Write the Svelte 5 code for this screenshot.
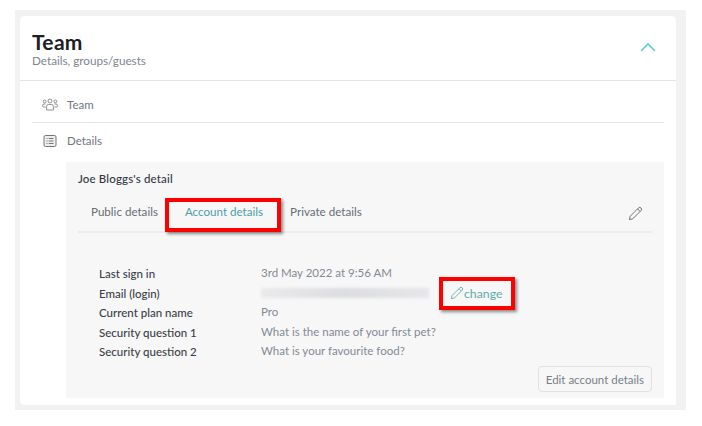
<script>
  const rows = [
    { label: 'Last sign in', value: '3rd May 2022 at 9:56 AM' },
    { label: 'Email (login)', blurred: true },
    { label: 'Current plan name', value: 'Pro' },
    { label: 'Security question 1', value: 'What is the name of your first pet?' },
    { label: 'Security question 2', value: 'What is your favourite food?' },
  ];
</script>

{#snippet pencil(size)}
  <svg width={size} height={size} viewBox="0 0 16 16" fill="none" stroke="currentColor" stroke-width="1" stroke-linejoin="round">
    <path d="M1.5 14.5 L2.3 11 L11.3 2 Q12.6 0.9 13.9 2.1 Q15.1 3.4 14 4.7 L5 13.7 Z" />
    <path d="M10.2 3.1 L12.9 5.8" />
  </svg>
{/snippet}

<div class="page">
  <div class="frame">
    <div class="card">
      <header class="head">
        <div>
          <h1>Team</h1>
          <p>Details, groups/guests</p>
        </div>
        <svg class="chevron" width="16" height="10" viewBox="0 0 16 10" fill="none" stroke="#5fcfc0" stroke-width="1.6">
          <path d="M1 9 L8 2 L15 9" />
        </svg>
      </header>

      <div class="body">
        <div class="row team-row">
          <svg class="icon" width="16" height="13" viewBox="0 0 16 13" fill="none" stroke="#777" stroke-width="0.8">
            <circle cx="8" cy="3" r="2" />
            <circle cx="2.6" cy="3.4" r="1.4" />
            <circle cx="13.4" cy="3.4" r="1.4" />
            <path d="M4.6 12 V8.6 Q4.6 6.5 6.5 6.5 H9.5 Q11.4 6.5 11.4 8.6 V12 Z" />
            <path d="M3.6 9 H1.6 Q0.6 9 0.6 7.6 Q0.6 6 2 6 H3.6" />
            <path d="M12.4 9 H14.4 Q15.4 9 15.4 7.6 Q15.4 6 14 6 H12.4" />
          </svg>
          <span>Team</span>
        </div>
        <div class="row details-row">
          <svg class="icon" width="13" height="12" viewBox="0 0 13 12" fill="none" stroke="#666" stroke-width="0.9">
            <rect x="0.5" y="0.5" width="12" height="11" rx="1.5" fill="#eee" />
            <path d="M3 3.5 H4 M5.2 3.5 H10 M3 6 H4 M5.2 6 H10 M3 8.5 H4 M5.2 8.5 H10" />
          </svg>
          <span>Details</span>
        </div>

        <section class="panel">
          <h2>Joe Bloggs's detail</h2>
          <nav class="tabs">
            <span class="tab">Public details</span>
            <span class="tab active">Account details</span>
            <span class="tab private">Private details</span>
            <span class="tab-edit">{@render pencil(15)}</span>
          </nav>

          <dl class="info">
            {#each rows as row}
              <div class="line">
                <dt>{row.label}</dt>
                {#if row.blurred}
                  <dd class="email">
                    <span class="blur"></span>
                    <span class="change">{@render pencil(14)}change</span>
                  </dd>
                {:else}
                  <dd>{row.value}</dd>
                {/if}
              </div>
            {/each}
          </dl>

          <div class="actions">
            <button>Edit account details</button>
          </div>
        </section>
      </div>
    </div>
  </div>
</div>

<style>
  :global(body) {
    margin: 0;
    background: #fff;
    font-family: Lato, "Open Sans", sans-serif;
  }
  .page {
    width: 702px;
    height: 426px;
    padding: 10px 16px 16px 15px;
    box-sizing: border-box;
  }
  .frame {
    height: 400px;
    background: #f2f2f3;
    padding: 6px 10px 5px 5px;
    box-sizing: border-box;
  }
  .card {
    height: 389px;
    background: #fff;
    border-radius: 5px 5px 0 5px;
    overflow: hidden;
  }
  .head {
    height: 65px;
    box-sizing: border-box;
    border-bottom: 1px solid #e2e4ea;
    padding: 15px 20px 0 12px;
    display: flex;
    justify-content: space-between;
  }
  h1 {
    margin: 0;
    font-size: 21px;
    line-height: 22px;
    font-weight: 700;
    color: #1b2026;
    letter-spacing: 0.3px;
  }
  .head p {
    margin: 0;
    font-size: 11.7px;
    line-height: 14px;
    color: #7d8690;
  }
  .chevron {
    margin-top: 11px;
  }
  .body {
    padding: 0 12px;
  }
  .row {
    box-sizing: border-box;
    display: flex;
    align-items: center;
    font-size: 11.5px;
    color: #6f7780;
  }
  .team-row {
    height: 42px;
    padding-top: 5px;
    border-bottom: 1px solid #e2e4ea;
  }
  .details-row {
    height: 39px;
    padding-bottom: 4px;
  }
  .icon {
    margin-left: 10px;
    margin-right: 9px;
    width: 16px;
  }
  .panel {
    margin-left: 34px;
    height: 236px;
    box-sizing: border-box;
    background: #f7f7f8;
    padding: 10px 12px 0;
    position: relative;
  }
  h2 {
    margin: 0;
    font-size: 11.5px;
    line-height: 14px;
    font-weight: 500;
    letter-spacing: 0.15px;
    color: #33383f;
  }
  .tabs {
    margin-top: 14px;
    height: 31px;
    display: flex;
    align-items: flex-start;
    border-bottom: 2px solid #ececee;
    font-size: 11.6px;
    color: #666d75;
  }
  .tab {
    line-height: 20px;
    padding-top: 2px;
  }
  .tab:first-child {
    margin-left: 13px;
  }
  .active {
    position: relative;
    margin-left: 27px;
    color: #4f9ea6;
  }
  .active::after {
    content: '';
    position: absolute;
    left: -20px;
    right: -18px;
    top: -2px;
    height: 26px;
    border: 4px solid #f00;
    box-shadow: 2px 2px 3px rgba(0, 0, 0, 0.45);
  }
  .private {
    margin-left: 27px;
  }
  .tab-edit {
    margin-left: auto;
    margin-right: 9px;
    margin-top: 6px;
    color: #666;
  }
  .info {
    margin: 31px 0 0 21px;
  }
  .line {
    display: flex;
    height: 19.5px;
    align-items: center;
    font-size: 11.5px;
  }
  dt {
    width: 162px;
    font-weight: 500;
    color: #3a4047;
  }
  dd {
    margin: 0 0 2px;
    color: #828a93;
    font-size: 11.5px;
  }
  .email {
    display: flex;
    align-items: center;
    position: relative;
    margin-bottom: 0;
  }
  .blur {
    width: 168px;
    height: 10px;
    background: linear-gradient(90deg, #eaeaec, #dcdde0 50%, #e6e6e8);
    filter: blur(1.5px);
  }
  .change {
    position: relative;
    margin-left: 21px;
    display: flex;
    align-items: center;
    color: #62a9ae;
    font-size: 12.3px;
  }
  .change::after {
    content: '';
    position: absolute;
    left: -11px;
    right: -12px;
    top: -9px;
    bottom: -9px;
    border: 4px solid #f00;
    box-shadow: 2px 2px 3px rgba(0, 0, 0, 0.45);
  }
  .actions {
    position: absolute;
    right: 12px;
    bottom: 6px;
  }
  button {
    height: 26px;
    padding: 0 7px;
    background: transparent;
    border: 1px solid #dfe1e5;
    border-radius: 4px;
    font: 11.5px Lato, sans-serif;
    color: #777e86;
  }
</style>
